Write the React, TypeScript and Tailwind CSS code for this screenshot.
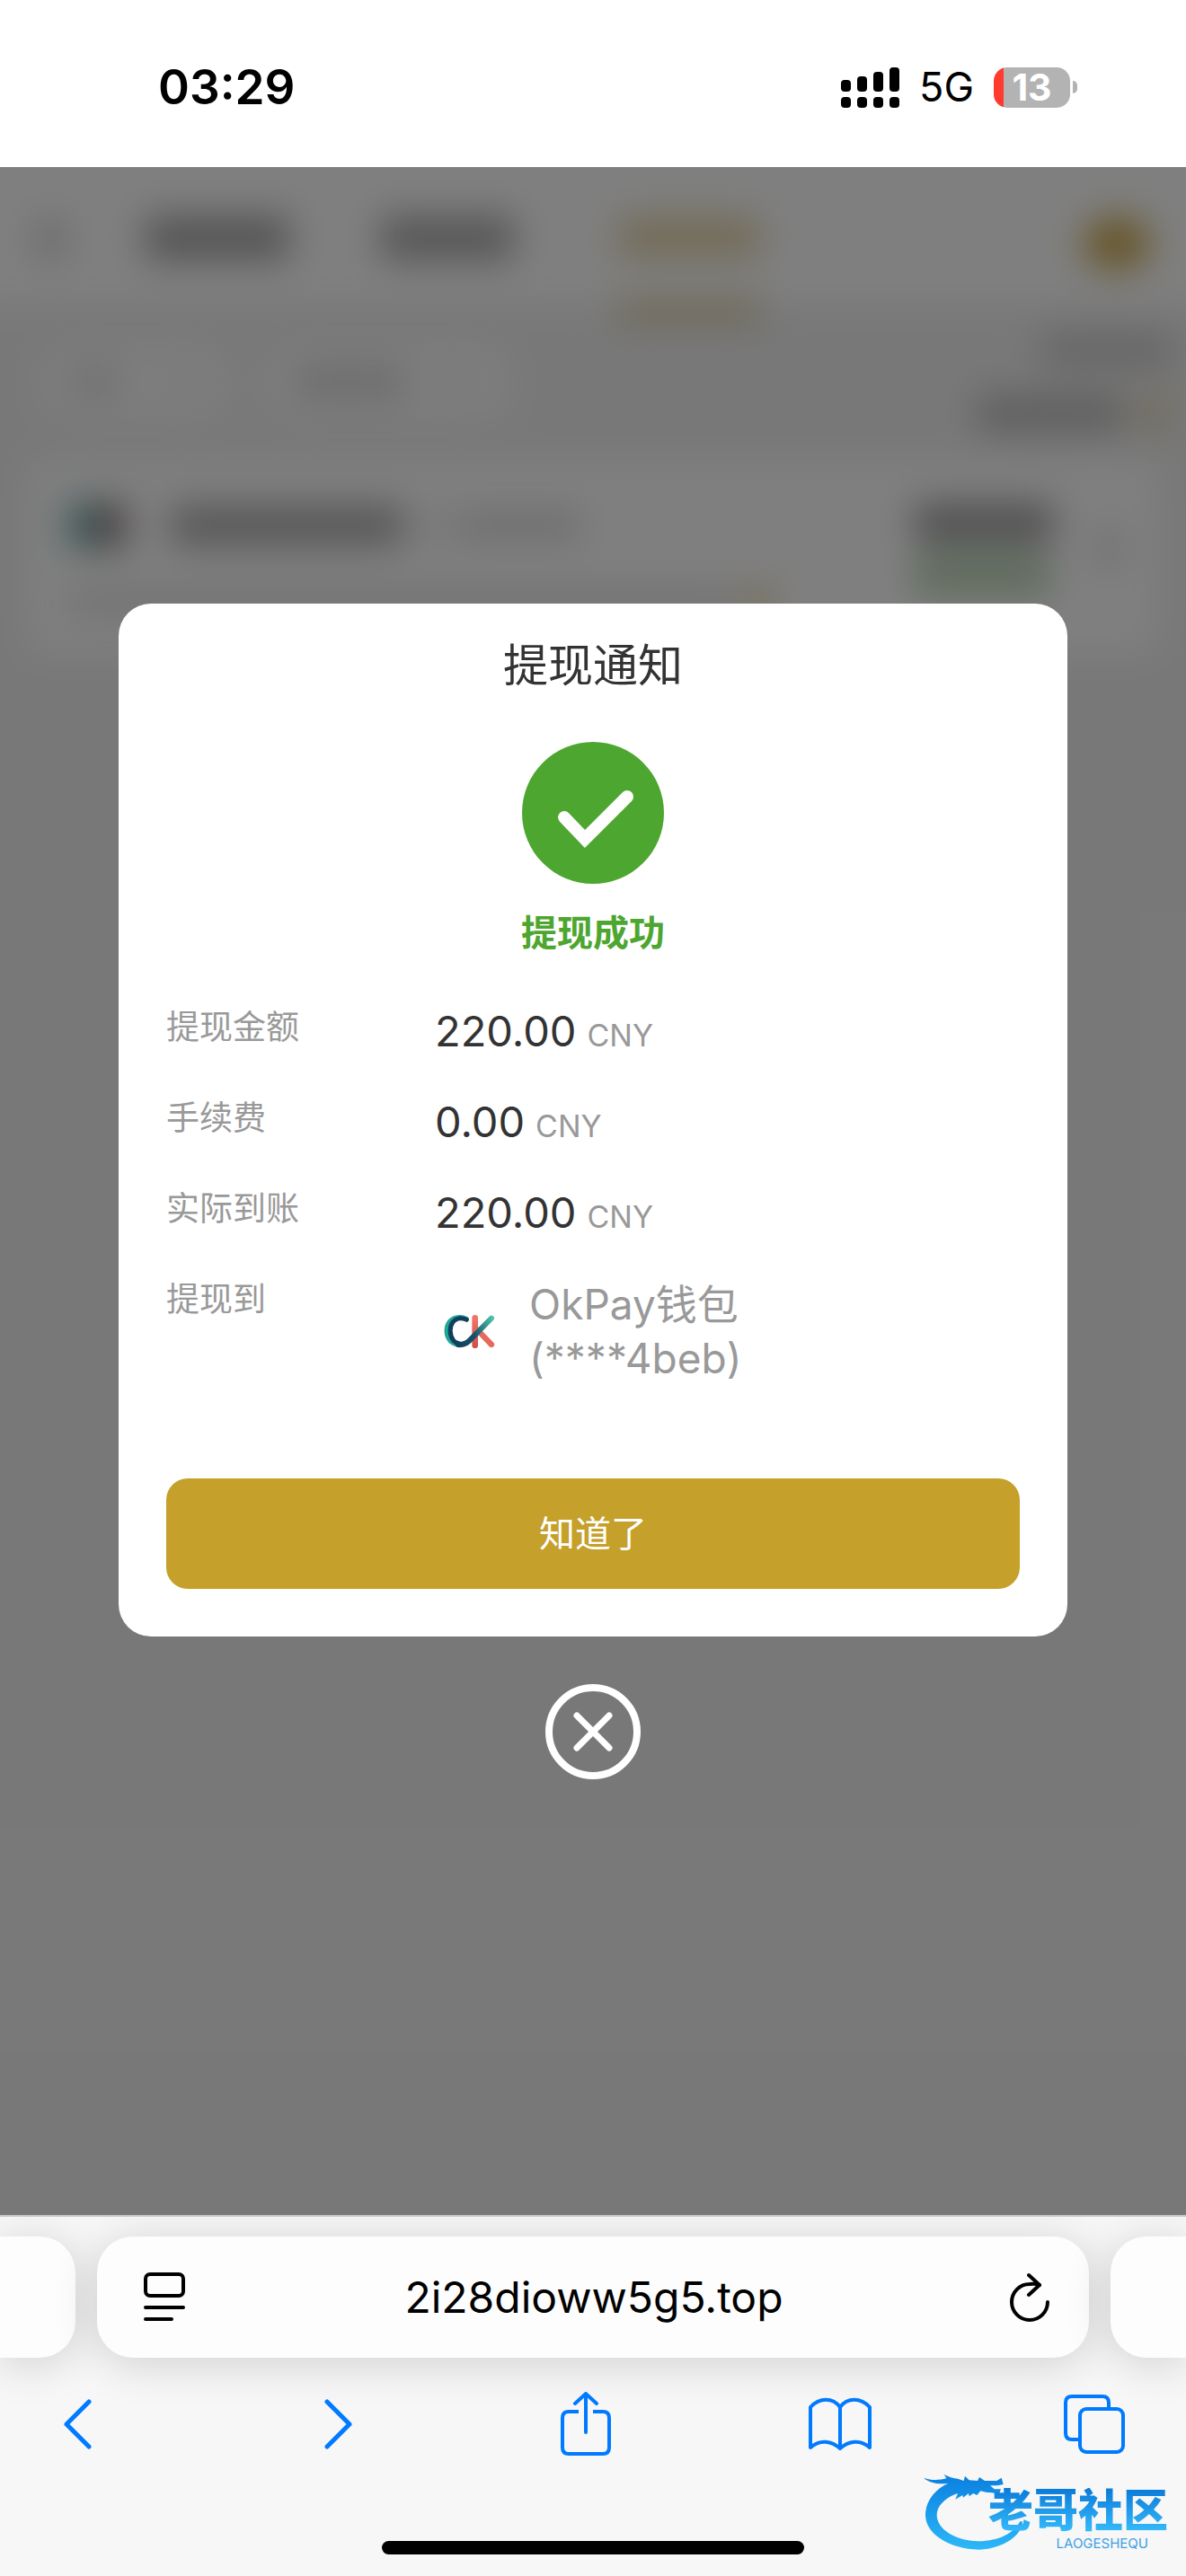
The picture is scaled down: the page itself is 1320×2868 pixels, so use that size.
import React from 'react';

const FONT = "font-['Inter','Noto_Sans_CJK_SC',sans-serif]";

function SignalIcon() {
  const bars = [
    [0, 14],
    [18, 10],
    [36, 5],
    [54, 0],
  ];
  return (
    <svg width="65" height="45" viewBox="0 0 65 45" aria-hidden="true">
      {bars.map(([x, y]) => (
        <g key={x}>
          <rect x={x} y={y} width="11" height={27 - y} rx="4" />
          <rect x={x} y="33" width="11" height="12" rx="4" />
        </g>
      ))}
    </svg>
  );
}

function Battery() {
  return (
    <div className="flex items-center gap-[3px]">
      <div className="flex h-[45px] w-[85px] items-center justify-center rounded-[15px] bg-linear-to-r from-[#ff3b30] from-[13%] to-[#b3b3b3] to-[13%] text-[41px] leading-[45px] font-bold text-white">
        13
      </div>
      <div className="h-[14px] w-[5px] rounded-r-full bg-[#b3b3b3]" />
    </div>
  );
}

function StatusBar() {
  return (
    <header className="flex h-[186px] items-center justify-between bg-white pt-[8px] pr-[121px] pl-[176px] text-black">
      <time className="text-[53px] leading-[60px] font-semibold">03:29</time>
      <div className="flex items-center gap-[22px]">
        <SignalIcon />
        <span className="text-[45px] leading-[60px]">5G</span>
        <Battery />
      </div>
    </header>
  );
}

/* Page behind the dialog: shapes only, out of focus */
function PageBehind() {
  return (
    <div className="absolute inset-0 overflow-hidden bg-[#f1f1f1]" aria-hidden="true">
      <div className="blur-[20px]">
        <div className="-mx-10 -mt-10 flex h-[192px] items-start justify-between bg-white px-20 pt-[94px]">
          <div className="flex items-start">
            <div className="mt-1 h-[44px] w-[32px] bg-[#d4d4d4]" />
            <div className="ml-[90px] h-[50px] w-[160px] bg-[#aaaaaa]" />
            <div className="ml-[102px] h-[50px] w-[148px] bg-[#aeaeae]" />
            <div className="ml-[116px] flex flex-col gap-[48px]">
              <div className="h-[48px] w-[158px] bg-[#e6d8b0]" />
              <div className="h-[18px] w-[158px] bg-[#d2bc88]" />
            </div>
          </div>
          <div className="mt-[2px] h-[58px] w-[74px] rounded-full bg-[#cdab52]" />
        </div>
        <div className="flex h-[174px] items-center justify-between pr-[16px] pl-[44px]">
          <div className="flex gap-[40px]">
            <div className="flex h-[86px] w-[210px] items-center gap-[60px] rounded-[30px] bg-[#fcfcfc] px-[34px]">
              <div className="h-[34px] w-[60px] bg-[#e0e0e0]" />
              <div className="h-[20px] w-[28px] bg-[#e4e4e4]" />
            </div>
            <div className="flex h-[86px] w-[276px] items-center gap-[44px] rounded-[30px] bg-[#fcfcfc] px-[34px]">
              <div className="h-[34px] w-[122px] bg-[#d6d6d6]" />
              <div className="h-[20px] w-[28px] bg-[#e8e8e8]" />
            </div>
          </div>
          <div className="flex flex-col items-end gap-[30px]">
            <div className="h-[40px] w-[144px] bg-[#cccccc]" />
            <div className="flex gap-[18px]">
              <div className="h-[40px] w-[162px] bg-[#bcbcbc]" />
              <div className="h-[40px] w-[36px] bg-[#e4d8b8]" />
            </div>
          </div>
        </div>
        <div className="mx-[30px] flex h-[216px] items-start justify-between rounded-[20px] bg-white px-[46px] pt-[48px]">
          <div className="flex flex-col gap-[46px]">
            <div className="flex items-center">
              <div className="h-[50px] w-[30px] bg-[#70acac]" />
              <div className="h-[50px] w-[34px] bg-[#908080]" />
              <div className="ml-[50px] h-[46px] w-[258px] bg-[#b0b0b0]" />
              <div className="ml-[16px] h-[30px] w-[50px] bg-[#f0f0f0]" />
              <div className="h-[34px] w-[132px] bg-[#dedede]" />
            </div>
            <div className="flex gap-[10px]">
              <div className="h-[28px] w-[740px] bg-[#e2e2e2]" />
              <div className="h-[28px] w-[34px] bg-[#e6d4a0]" />
            </div>
          </div>
          <div className="flex items-center gap-[52px]">
            <div className="flex flex-col gap-[16px]">
              <div className="h-[46px] w-[154px] bg-[#a2a2a2]" />
              <div className="h-[38px] w-[150px] bg-[#b2d2ac]" />
            </div>
            <div className="h-[40px] w-[20px] bg-[#d4d4d4]" />
          </div>
        </div>
      </div>
    </div>
  );
}

function OkPayLogo() {
  return (
    <svg width="66" height="60" viewBox="84 156 198 180" fill="none" strokeLinecap="round" className="shrink-0" aria-hidden="true">
      <defs>
        <linearGradient id="okDark" gradientUnits="userSpaceOnUse" x1="120" y1="270" x2="265" y2="200">
          <stop offset="0" stopColor="#123e5c" />
          <stop offset="0.5" stopColor="#17506a" />
          <stop offset="1" stopColor="#4fc4ac" />
        </linearGradient>
        <linearGradient id="okRed" gradientUnits="userSpaceOnUse" x1="206" y1="195" x2="206" y2="300">
          <stop offset="0" stopColor="#f0786a" />
          <stop offset="1" stopColor="#d04f48" />
        </linearGradient>
      </defs>
      <path d="M206 202V293" stroke="url(#okRed)" strokeWidth="20" />
      <path d="M214 242L261 291" stroke="#e6695b" strokeWidth="19" />
      <path d="M177 205C160 197 137 199 123 213C107 231 108 263 125 280C134 288 146 292 157 291" stroke="#1fa694" strokeWidth="16" />
      <path d="M178 208C160 200 143 203 132 216C120 232 121 261 134 277C146 291 168 292 181 282" stroke="#113f5c" strokeWidth="15" />
      <path d="M150 291C166 293 178 287 188 277L261 203" stroke="url(#okDark)" strokeWidth="18" />
    </svg>
  );
}

function AmountRow({ label, amount }: { label: string; amount: string }) {
  return (
    <div className="flex items-start">
      <dt className="w-[299px] text-[37px] leading-[58px] text-[#999]">{label}</dt>
      <dd className="flex items-baseline gap-[12px] text-[47px] leading-[66px] text-[#333]">
        {amount}
        <span className="text-[34px] leading-[40px] text-[#999]">CNY</span>
      </dd>
    </div>
  );
}

function WithdrawDialog() {
  return (
    <section
      role="dialog"
      aria-labelledby="dialog-title"
      className="flex w-4/5 flex-col items-center rounded-[36px] bg-white px-[53px] pt-[32px] pb-[53px]"
    >
      <h1 id="dialog-title" className="text-[50px] leading-[74px] text-[#333]">
        提现通知
      </h1>
      <svg width="158" height="158" viewBox="0 0 158 158" className="mt-[48px]" aria-hidden="true">
        <circle cx="79" cy="79" r="79" fill="#4da62f" />
        <path d="M47 84L70 108L117 61" fill="none" stroke="#fff" strokeWidth="14" strokeLinecap="round" />
      </svg>
      <p className="mt-[24px] text-[40px] leading-[62px] font-bold text-[#4da62f]">提现成功</p>
      <dl className="mt-[45px] flex w-full flex-col gap-[35px]">
        <AmountRow label="提现金额" amount="220.00" />
        <AmountRow label="手续费" amount="0.00" />
        <AmountRow label="实际到账" amount="220.00" />
        <div className="flex items-start">
          <dt className="w-[299px] text-[37px] leading-[58px] text-[#999]">提现到</dt>
          <dd className="flex items-center gap-[35px] pt-1 pl-1 text-[46px] leading-[60px] text-[#999]">
            <OkPayLogo />
            <span>
              OkPay钱包
              <br />
              (****4beb)
            </span>
          </dd>
        </div>
      </dl>
      <button type="button" className="mt-[104px] h-[123px] w-full rounded-[24px] bg-[#c5a02a] pt-[2px] text-[40px] text-white">
        知道了
      </button>
    </section>
  );
}

function Watermark() {
  return (
    <div className="pointer-events-none absolute right-[16px] bottom-[28px] h-[96px] w-[276px]">
      <svg width="276" height="96" viewBox="54 64 828 288" className="absolute inset-0" aria-hidden="true">
        <defs>
          <linearGradient id="dragon" x1="0" y1="0" x2="0" y2="1">
            <stop offset="0" stopColor="#0a7fe0" />
            <stop offset="1" stopColor="#2cb8f8" />
          </linearGradient>
        </defs>
        <path
          fill="url(#dragon)"
          d="M54 108C80 118 108 116 130 110L122 96C138 106 152 108 170 112L188 118L192 102L206 116L234 118L240 106L258 118L298 118L314 108L320 130L300 134L276 134L290 146L312 146L306 162L282 158L262 156L244 152L232 166L220 160L206 170L204 160L186 174L184 166L160 180L168 160C130 172 98 200 98 232C98 280 160 318 236 320C306 320 356 292 376 254L384 254C384 300 318 346 240 348C140 346 60 296 60 232C60 186 92 146 136 126C110 130 76 128 54 108Z"
        />
      </svg>
      <div className="relative flex flex-col items-end pt-[26px] pr-[4px]">
        <span className="bg-linear-to-b from-[#0a7ad8] to-[#36bcfb] bg-clip-text text-[50px] leading-[50px] font-black text-transparent">
          老哥社区
        </span>
        <span className="mt-[4px] pr-[22px] text-[15px] leading-[16px] text-[#3d9fe6]">LAOGESHEQU</span>
      </div>
    </div>
  );
}

function BrowserBar() {
  const card = 'h-[135px] bg-[#fdfdfd] shadow-[0_6px_50px_rgba(0,0,0,0.16)]';
  const tool = 'flex h-[80px] w-[80px] items-center justify-center';
  return (
    <footer className="relative flex h-[402px] flex-col overflow-hidden border-t-2 border-[#c4c4c4] bg-[#f7f7f7]">
      <div className="flex gap-[24px] pt-[22px]">
        <div className={card + ' w-[84px] rounded-r-[40px]'} />
        <div className={card + ' flex flex-1 items-center rounded-[40px] px-[40px]'}>
          <button type="button" aria-label="Reader" className="flex w-[70px] justify-center">
            <svg width="46" height="55" viewBox="0 0 46 55" fill="none" stroke="#000" strokeWidth="4" strokeLinecap="round">
              <rect x="2" y="2" width="42" height="24" rx="5" />
              <path d="M2 39H44M2 52H31" />
            </svg>
          </button>
          <input
            aria-label="Address"
            defaultValue="2i28dioww5g5.top"
            className="h-full min-w-0 flex-1 bg-transparent pr-[16px] text-center text-[48px] text-black outline-none"
          />
          <button type="button" aria-label="Reload" className="flex w-[52px] justify-center">
            <svg width="46" height="56" viewBox="0 0 46 56" fill="none" stroke="#000" strokeWidth="4" strokeLinecap="round" strokeLinejoin="round">
              <path d="M43 33A20 20 0 1 1 23 13Q29 12 34 14" />
              <path d="M22 3L34 14L22 25" />
            </svg>
          </button>
        </div>
        <div className={card + ' w-[84px] rounded-l-[40px]'} />
      </div>
      <nav className="relative flex justify-between pt-[34px] pr-[62px] pl-[46px] text-[#007aff]">
        <button type="button" aria-label="Back" className={tool}>
          <svg width="32" height="56" viewBox="0 0 32 56" fill="none" stroke="currentColor" strokeWidth="5" strokeLinecap="round" strokeLinejoin="round">
            <path d="M29 3L4 28L29 53" />
          </svg>
        </button>
        <button type="button" aria-label="Forward" className={tool + ' pl-[16px]'}>
          <svg width="32" height="56" viewBox="0 0 32 56" fill="none" stroke="currentColor" strokeWidth="5" strokeLinecap="round" strokeLinejoin="round">
            <path d="M3 3L28 28L3 53" />
          </svg>
        </button>
        <button type="button" aria-label="Share" className={tool}>
          <svg width="58" height="72" viewBox="0 0 58 72" fill="none" stroke="currentColor" strokeWidth="4" strokeLinecap="round" strokeLinejoin="round">
            <path d="M21 22H10Q3 22 3 29V62Q3 69 10 69H48Q55 69 55 62V29Q55 22 48 22H37" strokeLinecap="butt" />
            <path d="M29 45V2M17 13L29 2L41 13" />
          </svg>
        </button>
        <button type="button" aria-label="Bookmarks" className={tool}>
          <svg width="72" height="60" viewBox="0 0 72 60" fill="none" stroke="currentColor" strokeWidth="4" strokeLinecap="round" strokeLinejoin="round">
            <path d="M36 11V57C27 49 14 46 3 56V11C13 0 28 0 36 11C44 0 59 0 69 11V56C58 46 45 49 36 57" />
          </svg>
        </button>
        <button type="button" aria-label="Tabs" className={tool}>
          <svg width="68" height="67" viewBox="0 0 68 67" fill="none" stroke="currentColor" strokeWidth="4">
            <path d="M16 50H9Q2 50 2 43V9Q2 2 9 2H43Q50 2 50 9V15" />
            <rect x="18" y="16" width="48" height="48" rx="7" />
          </svg>
        </button>
      </nav>
      <div className="mx-auto mt-auto mb-[24px] h-[15px] w-[470px] rounded-full bg-black" />
      <Watermark />
    </footer>
  );
}

export default function App() {
  return (
    <div className={'flex min-h-screen flex-col ' + FONT}>
      <StatusBar />
      <main className="relative flex flex-1 flex-col">
        <PageBehind />
        <div className="relative flex flex-1 flex-col items-center justify-center gap-[53px] bg-black/50">
          <WithdrawDialog />
          <button type="button" aria-label="Close">
            <svg width="106" height="106" viewBox="0 0 106 106" fill="none" stroke="#fff" strokeLinecap="round">
              <circle cx="53" cy="53" r="49" strokeWidth="8" />
              <path d="M35 35L71 71M71 35L35 71" strokeWidth="7" />
            </svg>
          </button>
        </div>
      </main>
      <BrowserBar />
    </div>
  );
}
